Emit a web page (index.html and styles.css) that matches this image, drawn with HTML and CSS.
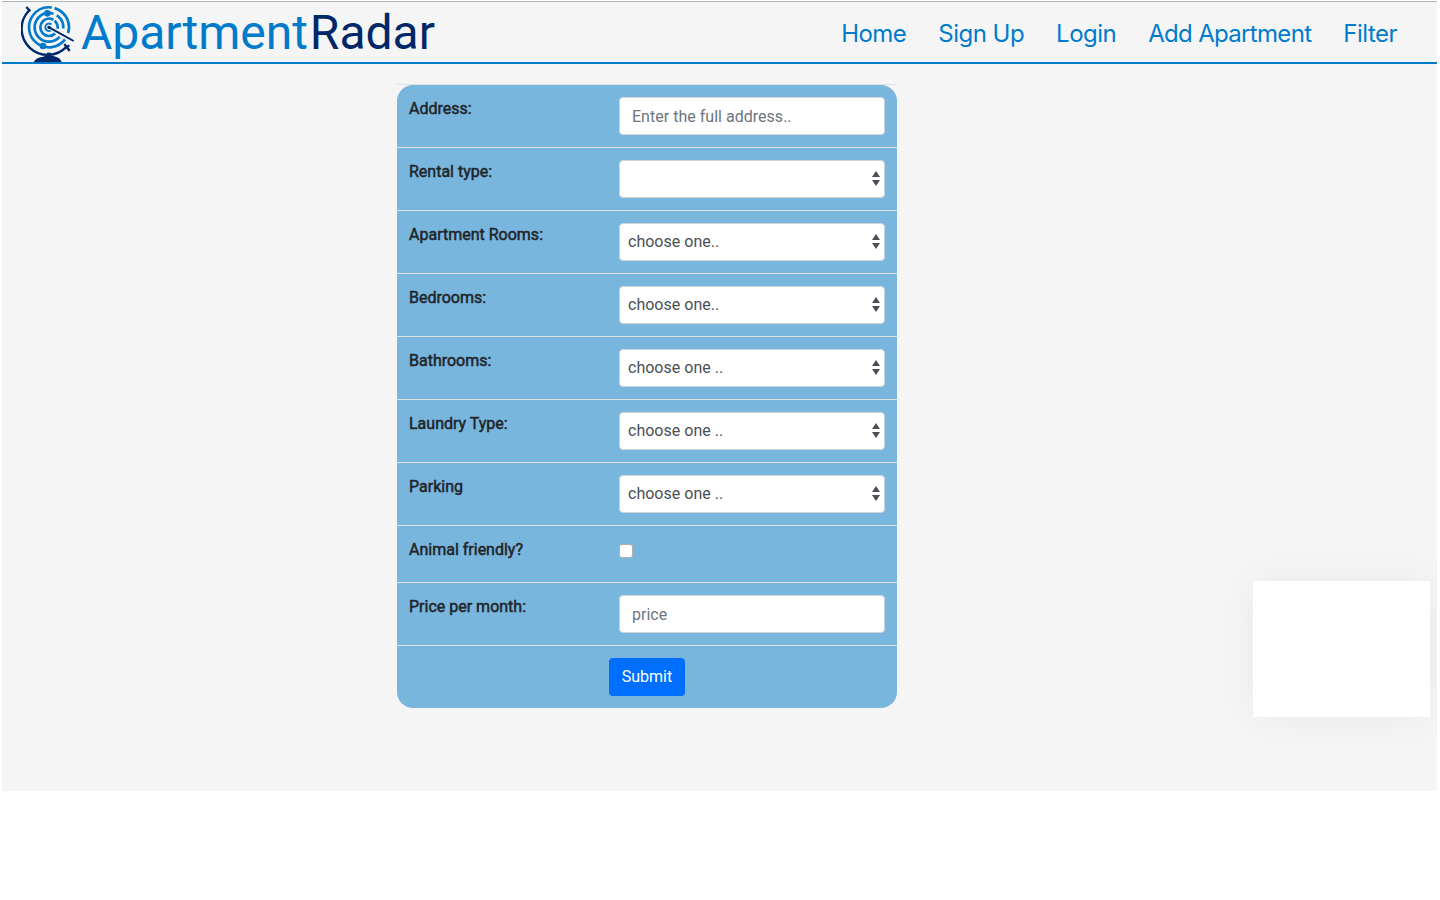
FILE: index.html
```html
<!DOCTYPE html>
<html lang="en">
<head>
<meta charset="utf-8">
<title>ApartmentRadar</title>
<link rel="stylesheet" href="styles.css">
</head>
<body>
<div class="page">
  <header class="navbar">
    <a class="brand">
      <svg class="globe" viewBox="0 0 180 180" fill="none" stroke-width="8">
        <g stroke="#007bcc">
          <circle cx="84" cy="76" r="60" pathLength="360" stroke-dasharray="240 8 90 22" transform="rotate(37 84 76)"/>
          <circle cx="84" cy="76" r="43" pathLength="360" stroke-dasharray="245 14 62 39" transform="rotate(42 84 76)"/>
          <circle cx="84" cy="76" r="26" pathLength="360" stroke-dasharray="255 10 60 35" transform="rotate(45 84 76)"/>
          <circle cx="84" cy="76" r="11" pathLength="360" stroke-width="6" stroke-dasharray="245 115" transform="rotate(60 84 76)"/>
          <g fill="#007bcc" stroke="none"><circle cx="79" cy="34" r="10"/><circle cx="66" cy="132" r="10"/></g>
        </g>
        <g stroke="#002868" stroke-width="7">
          <path d="M23 27A78 78 0 0 0 137 134M16 15L28 28M130 126L146 147M132 137L145 131"/>
          <path d="M84 76L158 117" stroke-width="6"/>
          <path d="M84 152V170" stroke-width="12"/>
          <path d="M38 180Q44 167 66 164L78 160H90L104 164Q118 167 122 180Z" fill="#002868" stroke="none"/>
          <circle cx="84" cy="76" r="5" fill="#002868" stroke="none"/>
        </g>
      </svg>
      <span class="name">Apartment</span><span class="name name-dark">Radar</span>
    </a>
    <nav class="links"><a>Home</a><a>Sign Up</a><a>Login</a><a class="long">Add Apartment</a><a>Filter</a></nav>
  </header>
  <form class="card">
    <div class="row first"><label>Address:</label><input class="control" type="text" placeholder="Enter the full address.."></div>
    <div class="row"><label>Rental type:</label><div class="control select"><span></span><svg class="arrows" viewBox="0 0 8 15"><path d="M0 6L4 0L8 6ZM0 9H8L4 15Z"/></svg></div></div>
    <div class="row"><label>Apartment Rooms:</label><div class="control select"><span>choose one..</span><svg class="arrows" viewBox="0 0 8 15"><path d="M0 6L4 0L8 6ZM0 9H8L4 15Z"/></svg></div></div>
    <div class="row"><label>Bedrooms:</label><div class="control select"><span>choose one..</span><svg class="arrows" viewBox="0 0 8 15"><path d="M0 6L4 0L8 6ZM0 9H8L4 15Z"/></svg></div></div>
    <div class="row"><label>Bathrooms:</label><div class="control select"><span>choose one ..</span><svg class="arrows" viewBox="0 0 8 15"><path d="M0 6L4 0L8 6ZM0 9H8L4 15Z"/></svg></div></div>
    <div class="row"><label>Laundry Type:</label><div class="control select"><span>choose one ..</span><svg class="arrows" viewBox="0 0 8 15"><path d="M0 6L4 0L8 6ZM0 9H8L4 15Z"/></svg></div></div>
    <div class="row"><label>Parking</label><div class="control select"><span>choose one ..</span><svg class="arrows" viewBox="0 0 8 15"><path d="M0 6L4 0L8 6ZM0 9H8L4 15Z"/></svg></div></div>
    <div class="row short"><label>Animal friendly?</label><input class="check" type="checkbox"></div>
    <div class="row"><label>Price per month:</label><input class="control" type="text" placeholder="price"></div>
    <div class="row actions"><button class="submit" type="button">Submit</button></div>
  </form>
  <div class="popup"></div>
</div>
</body>
</html>
```
FILE: styles.css
```css
* { box-sizing: border-box; }
body { margin: 0; background: #fff; font: 16px/24px Roboto, sans-serif; color: #212529; }
.page { position: relative; width: 1435px; height: 790px; margin: 1px 0 0 2px; background: #f5f5f5; overflow: hidden; }
.navbar { height: 63px; display: flex; justify-content: space-between; border-top: 1px solid #adb5b5; border-bottom: 2px solid #007bcc; }
.brand { display: flex; align-items: flex-start; padding-left: 19px; }
.globe { width: 60px; height: 60px; flex: none; }
.name { font-size: 48px; line-height: 62px; letter-spacing: -.05px; color: #007bcc; }
.name-dark { margin-left: 2px; letter-spacing: 0; color: #002868; }
.links { display: flex; gap: 32px; padding-right: 40px; font: 24px/64px Inter, sans-serif; letter-spacing: -.52px; color: #007bcc; }
.links .long { letter-spacing: -.68px; }
.card { width: 500px; margin: 20px 0 0 395px; border-top: 1px solid #dee2e6; }
.row { display: grid; grid-template-columns: 210px 266px; align-items: start; height: 63px; padding: 12px; border-top: 1px solid #dee2e6; background: #79b6de; }
.row.first { height: 62px; border-top: 0; border-radius: 16px 16px 0 0; }
.row.short { height: 57px; }
.row.actions { display: flex; justify-content: center; border-radius: 0 0 16px 16px; }
label { -webkit-text-stroke: .5px #212529; }
.control { width: 266px; height: 38px; border: 1px solid #ced4da; border-radius: 4px; background: #fff; color: #495057; font: 16px/24px Roboto, sans-serif; padding: 6px 12px; letter-spacing: .02px; }
.control::placeholder { color: #6c757d; opacity: 1; }
.select { display: flex; justify-content: space-between; align-items: center; padding: 6px 4px 6px 8px; }
.arrows { width: 8px; height: 15px; margin-bottom: 1px; fill: #495057; }
.check { appearance: none; width: 14px; height: 14px; margin: 6px 0 0; border: 1px solid #b9aeaa; border-radius: 3px; background: #fff; }
.submit { width: 76px; height: 38px; padding: 0; border: 0; border-radius: 4px; background: #006fff; color: #fff; font: 16px/36px Roboto, sans-serif; }
.popup { position: absolute; left: 1251px; top: 580px; width: 177px; height: 136px; background: #fff; box-shadow: 0 0 40px rgba(0, 0, 0, .05); }
```
